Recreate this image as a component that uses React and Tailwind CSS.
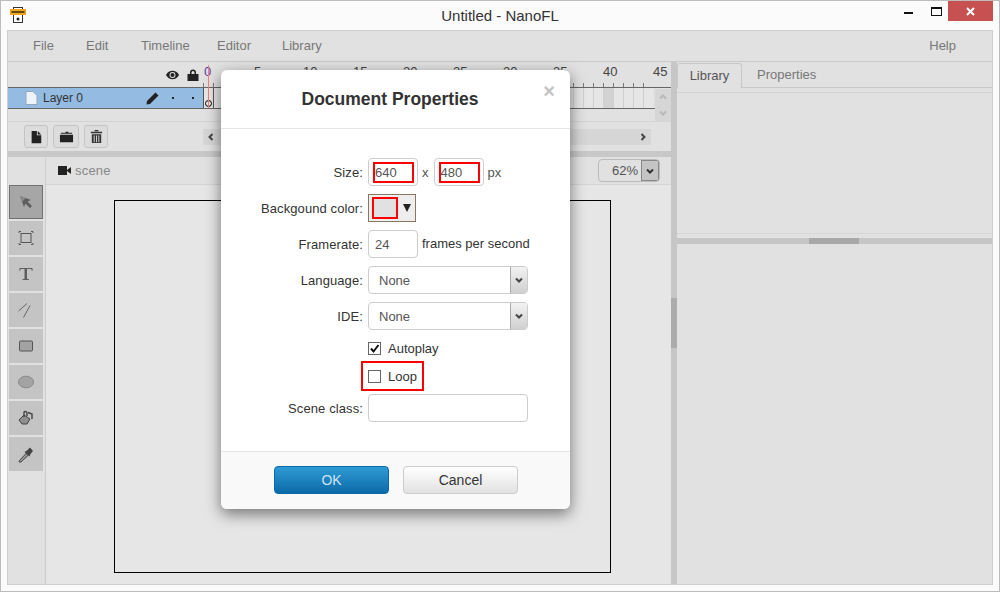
import React from 'react';

const menuLeft = [
  { label: 'File', className: 'w-[53px]' },
  { label: 'Edit', className: 'w-[55px]' },
  { label: 'Timeline', className: 'w-[76px]' },
  { label: 'Editor', className: 'w-[65px]' },
  { label: 'Library', className: 'w-[60px]' },
];

const rulerLabels = [0, 5, 10, 15, 20, 25, 30, 35, 40, 45];

const Glyph = ({ d, size = 14, className = '' }) => (
  <svg width={size} height={size} viewBox="0 0 16 16" className={className} fill="currentColor">
    <path d={d} />
  </svg>
);

const ToolButton = ({ active, children }) => (
  <div className={`w-[34px] h-[34px] flex items-center justify-center ${active ? 'bg-[#a6a6a6] border border-[#707070]' : 'bg-[#c4c4c4]'}`}>
    <svg width="20" height="20" viewBox="0 0 20 20">{children}</svg>
  </div>
);

const Chevron = ({ dir = 'down', className = '' }) => {
  const d = {
    down: 'M2 3.5 L5 6.5 L8 3.5',
    up: 'M2 6.5 L5 3.5 L8 6.5',
    left: 'M6.5 2 L3.5 5 L6.5 8',
    right: 'M3.5 2 L6.5 5 L3.5 8',
  }[dir];
  return (
    <svg width="10" height="10" viewBox="0 0 10 10" className={className}>
      <path d={d} fill="none" stroke="currentColor" strokeWidth="2" />
    </svg>
  );
};

const SelectBox = ({ value }) => (
  <div className="w-[160px] h-[28px] border border-[#ccc] rounded-[4px] bg-white flex items-center overflow-hidden">
    <span className="flex-1 pl-[10px] pt-[2px] text-[#555]">{value}</span>
    <span className="w-[17px] h-full bg-gradient-to-b from-[#f2f2f2] to-[#d0d0d0] border-l border-[#aaa] flex items-center justify-center text-[#444]">
      <Chevron />
    </span>
  </div>
);

const FormRow = ({ label, className = 'h-[28px]', children }) => (
  <div className={`flex items-center ${className}`}>
    <div className="w-[142px] pt-[2px] text-right text-[#333] shrink-0 tracking-[0.1px]">{label}</div>
    <div className="ml-[5px] flex items-center">{children}</div>
  </div>
);

const SizeInput = ({ value }) => (
  <div className="relative w-[50px] h-[28px] border border-[#ccc] rounded-[4px] bg-white flex items-center pl-[6px] pt-[2px] text-[#555]">
    {value}
    <div className="absolute left-[4px] top-[3px] w-[41px] h-[21px] border-2 border-[#f00]" />
  </div>
);

export default function App() {
  return (
    <div className="relative w-[1000px] h-[592px] overflow-hidden bg-[#fbfbfb] border border-[#bcbcbc] flex flex-col font-['Liberation_Sans',Arial,sans-serif] text-[13px]">
      {/* title bar */}
      <div className="h-[29px] shrink-0 flex items-start">
        <svg width="16" height="16" viewBox="0 0 16 16" className="ml-[9px] mt-[6px] shrink-0">
          <rect x="3.500" y="0.500" width="9" height="15" fill="#fff" stroke="#333" />
          <rect x="0" y="2" width="16" height="6" fill="#f0a51e" />
          <rect x="1.500" y="4" width="13" height="2" fill="#6a4a10" />
          <circle cx="8" cy="12" r="1.500" fill="#222" />
        </svg>
        <div className="flex-1 text-center text-[#333] text-[15px] leading-[30px] pl-[70px]">Untitled - NanoFL</div>
        <div className="flex items-start shrink-0 mr-[6px]">
          <div className="w-[9px] h-[2px] bg-[#111] mt-[11px] mr-[18px]" />
          <div className="w-[11px] h-[9px] border border-t-2 border-[#111] mt-[6px] mr-[6px]" />
          <div className="w-[45px] h-[20px] bg-[#c75050] flex items-center justify-center text-white">
            <svg width="9" height="9" viewBox="0 0 9 9"><path d="M1 1 L8 8 M8 1 L1 8" stroke="#fff" strokeWidth="2" /></svg>
          </div>
        </div>
      </div>

      {/* app frame */}
      <div className="flex-1 mx-[6px] mb-[6px] border border-[#cfcfcf] bg-[#e1e1e1] flex flex-col min-h-0">
        {/* menu */}
        <div className="h-[31px] shrink-0 flex items-center border-b border-[#cacaca] pl-[25px] pr-[36px] text-[#777]">
          {menuLeft.map((m) => (
            <span key={m.label} className={m.className}>{m.label}</span>
          ))}
          <span className="ml-auto">Help</span>
        </div>

        <div className="flex-1 flex min-h-0">
          {/* left column */}
          <div className="w-[663px] shrink-0 flex flex-col">
            {/* ruler */}
            <div className="h-[25px] shrink-0 flex">
              <div className="w-[195px] shrink-0 flex items-center justify-end gap-[8px] pr-[4px] text-[#222]">
                <svg width="13" height="10" viewBox="0 0 14 10">
                  <path d="M0 5 C3 -1 11 -1 14 5 C11 11 3 11 0 5Z" fill="#222" />
                  <circle cx="7" cy="5" r="3.200" fill="#e1e1e1" />
                  <circle cx="7" cy="5" r="2.200" fill="#222" />
                </svg>
                <svg width="12" height="12" viewBox="0 0 12 12">
                  <path d="M3 5V3.500a3 3 0 0 1 6 0V5h2.500v7H0.500V5zm1.500 0h3V3.500a1.500 1.500 0 0 0-3 0z" fill="#222" />
                </svg>
              </div>
              <div className="flex-1 relative">
                {rulerLabels.map((n, i) => (
                  <span key={n} style={{ left: i * 50 + (n >= 10 ? 0 : 1) }} className={`absolute top-[3px] leading-[14px] ${n === 0 ? 'text-[#5a3aa0]' : 'text-[#444]'}`}>
                    {n}
                  </span>
                ))}
                <div className="absolute left-0 right-[18px] bottom-0 h-[4px] bg-[repeating-linear-gradient(90deg,#777_0,#777_1px,transparent_1px,transparent_10px)]" />
              </div>
            </div>

            {/* layer row */}
            <div className="h-[22px] shrink-0 flex border-y border-[#666]">
              <div className="w-[195px] shrink-0 bg-[#94bbe2] flex items-center text-[#333] text-[12px]">
                <svg width="13" height="14" viewBox="0 0 13 14" className="ml-[17px] mr-[5px]">
                  <path d="M1 0.500 H8 L12 4.500 V13.500 H1Z" fill="#eef3f8" stroke="#8fa8c0" />
                </svg>
                Layer 0
                <svg width="13" height="13" viewBox="0 0 13 13" className="ml-auto">
                  <path d="M9.500 0.500l3 3L4 12 0.500 12.500 1 9z" fill="#222" />
                </svg>
                <span className="w-[2px] h-[2px] bg-[#222] ml-[13px]" />
                <span className="w-[2px] h-[2px] bg-[#222] ml-[18px] mr-[9px]" />
              </div>
              <div className="flex-1 flex min-w-0 relative">
                <div className="w-[450px] h-full bg-[repeating-linear-gradient(90deg,#cfcfcf_0,#cfcfcf_1px,#e6e6e6_1px,#e6e6e6_10px)] relative">
                  <div className="absolute left-[400px] top-0 w-[10px] h-full bg-[#d2d2d2]" />
                  <div className="absolute left-0 top-0 w-[11px] h-full border-x border-[#555] bg-[#e6e6e6] flex items-end justify-center pb-[1px]">
                    <span className="w-[7px] h-[7px] rounded-full border border-black" />
                  </div>
                  <div className="absolute left-[5px] -top-[23px] w-[1px] h-[43px] bg-[#ee8080]" />
                </div>
              </div>
            </div>

            {/* blank row with vertical scroll buttons */}
            <div className="h-[13px] shrink-0 border-b border-[#d4d4d4] relative">
              <div className="absolute right-0 -top-[20px] bottom-0 w-[16px] bg-[#d6d6d6] flex flex-col items-center justify-around text-[#b8b8b8]">
                <Chevron dir="up" />
                <Chevron dir="down" />
              </div>
            </div>

            {/* toolbar */}
            <div className="h-[29px] shrink-0 flex items-center pl-[16px] relative">
              <button className="w-[24px] h-[23px] rounded-[3px] bg-[#dcdcdc] border border-[#c4c4c4] flex items-center justify-center text-[#222]">
                <Glyph size={14} d="M3 1h6v5h5v9H3zM10 1l4 4h-4z" />
              </button>
              <button className="w-[26px] h-[23px] ml-[5px] rounded-[3px] bg-[#dcdcdc] border border-[#c4c4c4] flex items-center justify-center text-[#222]">
                <Glyph size={15} d="M1 6h14v8H1zM2 4h5V3h3v1h4v1H2z" />
              </button>
              <button className="w-[24px] h-[23px] ml-[5px] rounded-[3px] bg-[#dcdcdc] border border-[#c4c4c4] flex items-center justify-center text-[#333]">
                <Glyph size={15} d="M2 3h12v1.500H2zM6 1h4v1.500H6zM3 5.500h10V15H3zm2 1.500v7h1V7zm2.500 0v7h1V7zM10 7v7h1V7z" />
              </button>
              <div className="ml-[95px] w-[448px] h-[16px] bg-[#d6d6d6] flex items-center justify-between px-[3px] text-[#444]">
                <Chevron dir="left" />
                <Chevron dir="right" />
              </div>
            </div>

            {/* splitter */}
            <div className="h-[6px] shrink-0 bg-[#c8c8c8]" />

            {/* stage area */}
            <div className="flex-1 flex min-h-0">
              <div className="w-[38px] shrink-0 border-r border-[#cdcdcd] pt-[28px] pl-[1px] flex flex-col gap-[2px]">
                <ToolButton active>
                  <path d="M4 4 L15 8 L11.500 9.500 L16 14 L14 16 L9.500 11.500 L8 15Z" fill="#5d5d5d" />
                  <path d="M4 4 L10 6 L6 10Z" fill="#8a8a8a" />
                </ToolButton>
                <ToolButton>
                  <rect x="5" y="5.500" width="10" height="9" fill="none" stroke="#555" />
                  <path d="M3 5V3.500h2M15 3.500h2V5M3 15v1.500h2M15 16.500h2V15" fill="none" stroke="#555" />
                </ToolButton>
                <ToolButton>
                  <path d="M3.500 4h13v3h-.7l-.5-1.900h-4.300v9.700l2 .5v.7H6.500v-.7l2-.5V5.100H4.700L4.200 7h-.7z" fill="#5f5f5f" />
                </ToolButton>
                <ToolButton>
                  <path d="M2.500 11 L11 3.500 M7.500 17.500 L14 5.500" stroke="#666" fill="none" />
                </ToolButton>
                <ToolButton>
                  <rect x="3.500" y="5" width="13" height="10" rx="1" fill="#a3a3a3" stroke="#555" />
                </ToolButton>
                <ToolButton>
                  <ellipse cx="10" cy="10" rx="7.500" ry="5.800" fill="#a3a3a3" stroke="#888" />
                </ToolButton>
                <ToolButton>
                  <path d="M3 12 L8 7 L14 11 L11 16 H6Z" fill="#8f8f8f" stroke="#444" />
                  <path d="M8 9 V4.500 C8 3 11 3 11 5 L11 8 M12 4.500 L16 6 L16 11" fill="none" stroke="#444" strokeWidth="1.400" />
                </ToolButton>
                <ToolButton>
                  <path d="M3.500 16.500 L10 9.500 L12 11.500 L5 18 L3 18Z" fill="#999" stroke="#444" />
                  <path d="M8.500 8 L13.500 12.500 L14.500 10 L17 7 L14 3.500 L11 6.500Z" fill="#444" />
                </ToolButton>
              </div>
              <div className="flex-1 flex flex-col min-w-0">
                <div className="h-[28px] shrink-0 flex items-center border-b border-[#d4d4d4] pl-[12px] pr-[11px] text-[#888] tracking-[0.2px]">
                  <svg width="13" height="9" viewBox="0 0 13 9" className="mr-[4px]">
                    <rect width="9" height="9" fill="#222" />
                    <path d="M9 4 L13 1 V8 L9 5Z" fill="#222" />
                  </svg>
                  scene
                  <div className="ml-auto w-[62px] h-[23px] border border-[#bbb] rounded-[4px] flex items-center overflow-hidden tracking-normal text-[#555]">
                    <span className="flex-1 text-right pr-[3px]">62%</span>
                    <span className="w-[18px] h-full bg-[#c4c4c4] border border-[#888] flex items-center justify-center text-[#333]">
                      <Chevron />
                    </span>
                  </div>
                </div>
                <div className="flex-1 bg-[#e6e6e6] pl-[68px] pt-[15px]">
                  <div className="w-[497px] h-[373px] border border-black" />
                </div>
              </div>
            </div>
          </div>

          {/* vertical splitter */}
          <div className="w-[6px] shrink-0 bg-[#c6c6c6] pt-[236px]">
            <div className="h-[50px] bg-[#acacac]" />
          </div>

          {/* right column */}
          <div className="flex-1 flex flex-col min-w-0">
            <div className="h-[26px] shrink-0 flex items-end border-b border-[#c8c8c8]">
              <div className="w-[65px] h-[25px] border border-b-0 border-[#c8c8c8] rounded-t-[3px] bg-[#e1e1e1] text-[#555] flex items-center justify-center -mb-[1px]">Library</div>
              <div className="ml-[15px] h-[24px] flex items-center text-[#777]">Properties</div>
            </div>
            <div className="h-[5px] shrink-0 border-b border-[#d4d4d4]" />
            <div className="h-[141px] shrink-0 border-b border-[#d6d6d6]" />
            <div className="h-[4px] shrink-0" />
            <div className="h-[6px] shrink-0 bg-[#c6c6c6] pl-[132px]">
              <div className="w-[50px] h-full bg-[#a8a8a8]" />
            </div>
            <div className="flex-1" />
          </div>
        </div>
      </div>

      {/* modal dialog */}
      <div className="absolute left-[220px] top-[69px] w-[349px] h-[439px] bg-white rounded-[6px] shadow-[0_5px_15px_rgba(0,0,0,0.5)] flex flex-col">
        <div className="h-[59px] shrink-0 border-b border-[#e5e5e5] relative flex items-center justify-center pr-[11px]">
          <h4 className="font-bold text-[17.5px] text-[#333]">Document Properties</h4>
          <span className="absolute right-[15px] top-[11px] text-[#c4c4c4] font-bold text-[20px] leading-[20px]">×</span>
        </div>
        <div className="flex-1 pt-[29px] flex flex-col">
          <FormRow label="Size:">
            <SizeInput value="640" />
            <span className="ml-[4px] mr-[5px] pt-[2px] text-[#555]">x</span>
            <SizeInput value="480" />
            <span className="ml-[4px] pt-[2px] text-[#555]">px</span>
          </FormRow>
          <FormRow label="Backgound color:" className="h-[28px] mt-[8px]">
            <div className="relative w-[48px] h-[28px] border border-[#8a7560] bg-[#eee] flex items-center justify-end pr-[3px]">
              <div className="absolute left-[3px] top-[2px] w-[26px] h-[22px] bg-[#e1e1e1] border-2 border-[#f00]" />
              <svg width="10" height="8" viewBox="0 0 10 8"><path d="M1 0 H9 L5 8Z" fill="#222" /></svg>
            </div>
          </FormRow>
          <FormRow label="Framerate:" className="h-[28px] mt-[8px]">
            <div className="w-[50px] h-[28px] border border-[#ccc] rounded-[4px] flex items-center pl-[6px] pt-[2px] text-[#555]">24</div>
            <span className="ml-[4px] text-[#333]">frames per second</span>
          </FormRow>
          <FormRow label="Language:" className="h-[28px] mt-[8px]">
            <SelectBox value="None" />
          </FormRow>
          <FormRow label="IDE:" className="h-[28px] mt-[8px]">
            <SelectBox value="None" />
          </FormRow>
          <FormRow label="" className="h-[20px] mt-[8px]">
            <div className="w-[13px] h-[13px] border border-[#666] flex items-center justify-center bg-white">
              <svg width="11" height="11" viewBox="0 0 11 11"><path d="M2 5.500 L4.500 8.500 L9.500 2" fill="none" stroke="#111" strokeWidth="2" /></svg>
            </div>
            <span className="ml-[7px] pt-[2px] text-[#333]">Autoplay</span>
          </FormRow>
          <FormRow label="" className="h-[30px] mt-[3px]">
            <div className="relative h-[30px] flex items-center">
              <div className="w-[13px] h-[13px] border border-[#666] bg-white" />
              <span className="ml-[7px] pt-[2px] text-[#333]">Loop</span>
              <div className="absolute -left-[7px] top-0 w-[63px] h-[30px] border-2 border-[#f00]" />
            </div>
          </FormRow>
          <FormRow label="Scene class:" className="h-[28px] mt-[3px]">
            <div className="w-[160px] h-[28px] border border-[#ccc] rounded-[4px]" />
          </FormRow>
        </div>
        <div className="h-[58px] shrink-0 border-t border-[#e5e5e5] bg-[#f9f9f9] rounded-b-[6px] flex items-start pt-[14px] pl-[53px] gap-[14px]">
          <button className="w-[115px] h-[28px] rounded-[4px] bg-gradient-to-b from-[#2e9bd4] to-[#0a6aa8] border border-[#0a6aa8] text-[#cfe4f2] text-[14px]">OK</button>
          <button className="w-[115px] h-[28px] rounded-[4px] bg-gradient-to-b from-[#fff] to-[#e2e2e2] border border-[#ccc] text-[#333] text-[14px]">Cancel</button>
        </div>
      </div>
    </div>
  );
}
